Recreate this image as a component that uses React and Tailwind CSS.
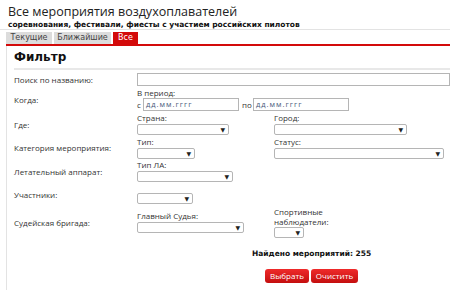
import React from "react";

const label = "text-[8px] text-[#333] leading-none";

function Select({ w }) {
  return (
    <div
      className={`${w} h-[11px] border border-[#b5b5b5] rounded-[2px] bg-white flex items-center justify-end pr-[3px]`}
    >
      <span className="text-[6px] leading-none text-[#222]">▼</span>
    </div>
  );
}

function DateBox() {
  return (
    <div className="w-[96px] h-[13px] border border-[#b5b5b5] bg-white flex items-center pl-[2px]">
      <span className="text-[7.5px] leading-none text-[#4a5a7a] tracking-[1px]">дд.мм.гггг</span>
    </div>
  );
}

function Row({ h, title, children }) {
  return (
    <div className={`flex ${h}`}>
      <div className={`w-[123px] flex items-center ${label}`}>{title}</div>
      <div className="flex-1 flex">{children}</div>
    </div>
  );
}

export default function App() {
  return (
    <div
      className="w-[450px] h-[290px] bg-white overflow-hidden"
      style={{ fontFamily: '"Open Sans", "DejaVu Sans", sans-serif' }}
    >
      <div className="pl-[8px] pt-[4px]">
        <h1 className="text-[12.5px] leading-[16px] h-[16px] text-[#222] font-normal">
          Все мероприятия воздухоплавателей
        </h1>
        <p
          className="text-[7.5px] leading-[9px] h-[9px] font-bold text-[#111]"
          style={{ fontFamily: '"DejaVu Sans", sans-serif' }}
        >
          соревнования, фестивали, фиесты с участием российских пилотов
        </p>
      </div>

      <div className="border-t border-[#e3e3e3] pl-[6px] pt-[2px]">
        <div className="flex gap-[2px] h-[12px] text-[8px]" style={{ fontFamily: '"DejaVu Sans", sans-serif' }}>
          <div className="w-[46px] bg-[#dcdcdc] text-[#444] flex items-center justify-center">Текущие</div>
          <div className="w-[57px] bg-[#dcdcdc] text-[#444] flex items-center justify-center">Ближайшие</div>
          <div className="w-[25px] bg-[#d30a0a] text-white flex items-center justify-center">Все</div>
        </div>
      </div>
      <div className="h-[2px] bg-[#d30a0a] ml-[6px]"></div>

      <div className="ml-[6px] border-l border-[#e3e3e3] h-[250px] pl-[7px]">
        <div
          className="pt-[4px] h-[22px] text-[12px] leading-[14px] font-bold text-[#111]"
          style={{ fontFamily: '"DejaVu Sans", sans-serif' }}
        >
          Фильтр
        </div>
        <div className="h-[2px] bg-[#e8e8e8]"></div>

        <div className="pt-[3px]">
          <Row h="h-[14px]" title="Поиск по названию:">
            <div className="flex-1 h-[13px] border border-[#b5b5b5] bg-white"></div>
          </Row>

          <Row h="h-[26px]" title="Когда:">
            <div className="flex flex-col pt-[1px]">
              <div className={`${label} h-[10px] pt-[1px]`}>В период:</div>
              <div className="flex items-center">
                <span className={`${label} w-[6px]`}>с</span>
                <DateBox />
                <span className={`${label} ml-[3px] w-[11px]`}>по</span>
                <DateBox />
              </div>
            </div>
          </Row>

          <Row h="h-[23px]" title="Где:">
            <div className="flex flex-col pt-[1px] w-[137px]">
              <div className={`${label} h-[10px]`}>Страна:</div>
              <Select w="w-[92px]" />
            </div>
            <div className="flex flex-col pt-[1px]">
              <div className={`${label} h-[10px]`}>Город:</div>
              <Select w="w-[133px]" />
            </div>
          </Row>

          <Row h="h-[24px]" title="Категория мероприятия:">
            <div className="flex flex-col pt-[2px] w-[137px]">
              <div className={`${label} h-[10px]`}>Тип:</div>
              <Select w="w-[58px]" />
            </div>
            <div className="flex flex-col pt-[2px]">
              <div className={`${label} h-[10px]`}>Статус:</div>
              <Select w="w-[170px]" />
            </div>
          </Row>

          <Row h="h-[23px]" title="Летательный аппарат:">
            <div className="flex flex-col pt-[1px]">
              <div className={`${label} h-[10px]`}>Тип ЛА:</div>
              <Select w="w-[96px]" />
            </div>
          </Row>

          <Row h="h-[24px]" title="Участники:">
            <div className="flex flex-col pt-[10px]">
              <Select w="w-[56px]" />
            </div>
          </Row>

          <Row h="h-[32px]" title="Судейская бригада:">
            <div className="flex flex-col pt-[5px] w-[137px]">
              <div className={`${label} h-[10px]`}>Главный Судья:</div>
              <Select w="w-[107px]" />
            </div>
            <div className="flex flex-col">
              <div className="text-[8px] text-[#333] leading-[10px] h-[20px]">
                Спортивные
                <br />
                наблюдатели:
              </div>
              <Select w="w-[30px]" />
            </div>
          </Row>

          <div
            className="pl-[238px] pt-[10px] h-[30px] text-[7.5px] leading-[10px] font-bold text-[#111]"
            style={{ fontFamily: '"DejaVu Sans", sans-serif' }}
          >
            Найдено мероприятий: 255
          </div>

          <div className="pl-[251px] flex gap-[2px]">
            <button className="w-[44px] h-[14px] rounded-[3px] bg-gradient-to-b from-[#ef2a2a] to-[#c40d0d] text-white text-[8px] leading-none">
              Выбрать
            </button>
            <button className="w-[47px] h-[14px] rounded-[3px] bg-gradient-to-b from-[#ef2a2a] to-[#c40d0d] text-white text-[8px] leading-none">
              Очистить
            </button>
          </div>
        </div>
      </div>
    </div>
  );
}
